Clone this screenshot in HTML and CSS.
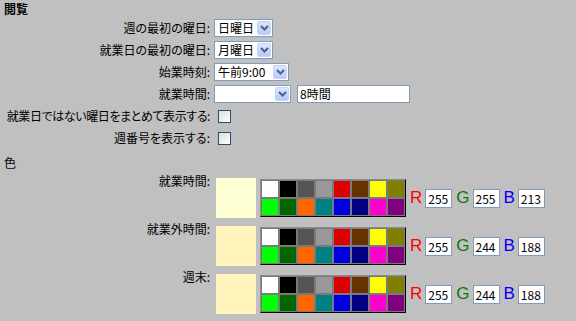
FILE: index.html
```html
<!DOCTYPE html>
<html lang="ja">
<head>
    <meta charset="UTF-8">
    <title>閲覧</title>
    <link rel="stylesheet" href="styles.css">
</head>
<body>

    <!-- View settings -->
    <h1 class="title">閲覧</h1>
    <div class="form">
        <label class="lbl">週の最初の曜日:</label>
        <div class="ctl">
            <div class="select w59"><span>日曜日</span><i class="drop"><svg width="9" height="6" viewBox="0 0 9 6"><path d="M1 1 L4.5 4.5 L8 1" fill="none" stroke="#4d6185" stroke-width="2"/></svg></i></div>
        </div>

        <label class="lbl">就業日の最初の曜日:</label>
        <div class="ctl">
            <div class="select w59"><span>月曜日</span><i class="drop"><svg width="9" height="6" viewBox="0 0 9 6"><path d="M1 1 L4.5 4.5 L8 1" fill="none" stroke="#4d6185" stroke-width="2"/></svg></i></div>
        </div>

        <label class="lbl">始業時刻:</label>
        <div class="ctl">
            <div class="select w75"><span>午前9:00</span><i class="drop"><svg width="9" height="6" viewBox="0 0 9 6"><path d="M1 1 L4.5 4.5 L8 1" fill="none" stroke="#4d6185" stroke-width="2"/></svg></i></div>
        </div>

        <label class="lbl">就業時間:</label>
        <div class="ctl">
            <div class="select w77"><span></span><i class="drop"><svg width="9" height="6" viewBox="0 0 9 6"><path d="M1 1 L4.5 4.5 L8 1" fill="none" stroke="#4d6185" stroke-width="2"/></svg></i></div>
            <div class="text wide">8時間</div>
        </div>

        <label class="lbl tight">就業日ではない曜日をまとめて表示する:</label>
        <div class="ctl"><span class="check"></span></div>

        <label class="lbl">週番号を表示する:</label>
        <div class="ctl"><span class="check"></span></div>
    </div>

    <!-- Colours -->
    <h2 class="section">色</h2>
    <div class="colors">
        <label class="lbl top">就業時間:</label>
        <div class="crow">
            <div class="preview" style="background: #ffffd5"></div>
            <div class="palette">
                <i class="c1"></i><i class="c2"></i><i class="c3"></i><i class="c4"></i><i class="c5"></i><i class="c6"></i><i class="c7"></i><i class="c8"></i>
                <i class="c9"></i><i class="c10"></i><i class="c11"></i><i class="c12"></i><i class="c13"></i><i class="c14"></i><i class="c15"></i><i class="c16"></i>
            </div>
            <b class="r">R</b><div class="text num">255</div>
            <b class="g">G</b><div class="text num">255</div>
            <b class="b">B</b><div class="text num">213</div>
        </div>

        <label class="lbl top">就業外時間:</label>
        <div class="crow">
            <div class="preview" style="background: #fff4bc"></div>
            <div class="palette">
                <i class="c1"></i><i class="c2"></i><i class="c3"></i><i class="c4"></i><i class="c5"></i><i class="c6"></i><i class="c7"></i><i class="c8"></i>
                <i class="c9"></i><i class="c10"></i><i class="c11"></i><i class="c12"></i><i class="c13"></i><i class="c14"></i><i class="c15"></i><i class="c16"></i>
            </div>
            <b class="r">R</b><div class="text num">255</div>
            <b class="g">G</b><div class="text num">244</div>
            <b class="b">B</b><div class="text num">188</div>
        </div>

        <label class="lbl top">週末:</label>
        <div class="crow">
            <div class="preview" style="background: #fff4bc"></div>
            <div class="palette">
                <i class="c1"></i><i class="c2"></i><i class="c3"></i><i class="c4"></i><i class="c5"></i><i class="c6"></i><i class="c7"></i><i class="c8"></i>
                <i class="c9"></i><i class="c10"></i><i class="c11"></i><i class="c12"></i><i class="c13"></i><i class="c14"></i><i class="c15"></i><i class="c16"></i>
            </div>
            <b class="r">R</b><div class="text num">255</div>
            <b class="g">G</b><div class="text num">244</div>
            <b class="b">B</b><div class="text num">188</div>
        </div>
    </div>

</body>
</html>
```

FILE: styles.css
```css
body {
    font-family: "Noto Sans CJK JP", sans-serif;
    font-size: 12px;
    font-feature-settings: "palt";
    background-color: #c0c0c0;
    color: #000;
    margin: 0;
    padding: 0 0 0 4px;
}

.title {
    font-size: 12px;
    font-weight: bold;
    line-height: 14px;
    margin: 2px 0 0 0;
}

.form {
    display: grid;
    grid-template-columns: 206px auto;
    column-gap: 4px;
    row-gap: 4px;
    margin-top: 3px;
}

.lbl {
    text-align: right;
    white-space: nowrap;
    line-height: 18px;
}

.lbl.tight {
    letter-spacing: -0.4px;
}

.lbl.top {
    line-height: 14px;
    margin-top: -4px;
}

.ctl {
    display: flex;
    align-items: center;
    gap: 6px;
    height: 18px;
}

.select {
    display: flex;
    align-items: center;
    justify-content: space-between;
    box-sizing: border-box;
    height: 18px;
    background: #fff;
    border: 1px solid #7f9db9;
    padding: 0 1px 0 3px;
    line-height: 16px;
}

.w59 { width: 59px; }
.w75 { width: 75px; }
.w77 { width: 77px; }

.drop {
    display: flex;
    align-items: center;
    justify-content: center;
    width: 14px;
    height: 14px;
    border-radius: 2px;
    background: linear-gradient(#dce6fd, #b7cbf8);
    border: 1px solid #c3d3fd;
    box-sizing: border-box;
}

.text {
    box-sizing: border-box;
    height: 18px;
    background: #fff;
    border: 1px solid #7f9db9;
    padding: 0 2px;
    line-height: 16px;
}

.wide {
    width: 113px;
}

.check {
    box-sizing: border-box;
    width: 13px;
    height: 13px;
    margin-left: 4px;
    border: 1px solid #1c5180;
    background: linear-gradient(135deg, #dcdcd7, #fff);
}

.section {
    font-size: 12px;
    font-weight: normal;
    line-height: 14px;
    margin: 9px 0 0 0;
}

.colors {
    display: grid;
    grid-template-columns: 206px auto;
    column-gap: 4px;
    row-gap: 8px;
    margin-top: 8px;
}

.crow {
    display: flex;
    align-items: center;
    height: 40px;
}

.preview {
    width: 40px;
    height: 40px;
    margin-left: 2px;
}

.palette {
    display: grid;
    grid-template-columns: repeat(8, 16px);
    grid-auto-rows: 16px;
    gap: 2px;
    padding: 1px;
    margin-left: 4px;
    background: #7a7a7a;
    border: 1px solid;
    border-color: #8c8c8c #000 #000 #8c8c8c;
}

.c1 { background: #ffffff; }
.c2 { background: #000000; }
.c3 { background: #555555; }
.c4 { background: #999999; }
.c5 { background: #dd0000; }
.c6 { background: #663300; }
.c7 { background: #ffff00; }
.c8 { background: #808000; }
.c9 { background: #00ff00; }
.c10 { background: #006600; }
.c11 { background: #ff6600; }
.c12 { background: #008080; }
.c13 { background: #0000dd; }
.c14 { background: #000080; }
.c15 { background: #ff00cc; }
.c16 { background: #800080; }

.crow b {
    font-family: "Liberation Sans", Arial, sans-serif;
    font-weight: normal;
    font-size: 17px;
    margin: 0 3px 0 4px;
}

.crow .r { color: #ff0000; }
.crow .g { color: #008000; }
.crow .b { color: #0000ff; }

.num {
    width: 27px;
    height: 19px;
    font-size: 12px;
    line-height: 17px;
}
```
